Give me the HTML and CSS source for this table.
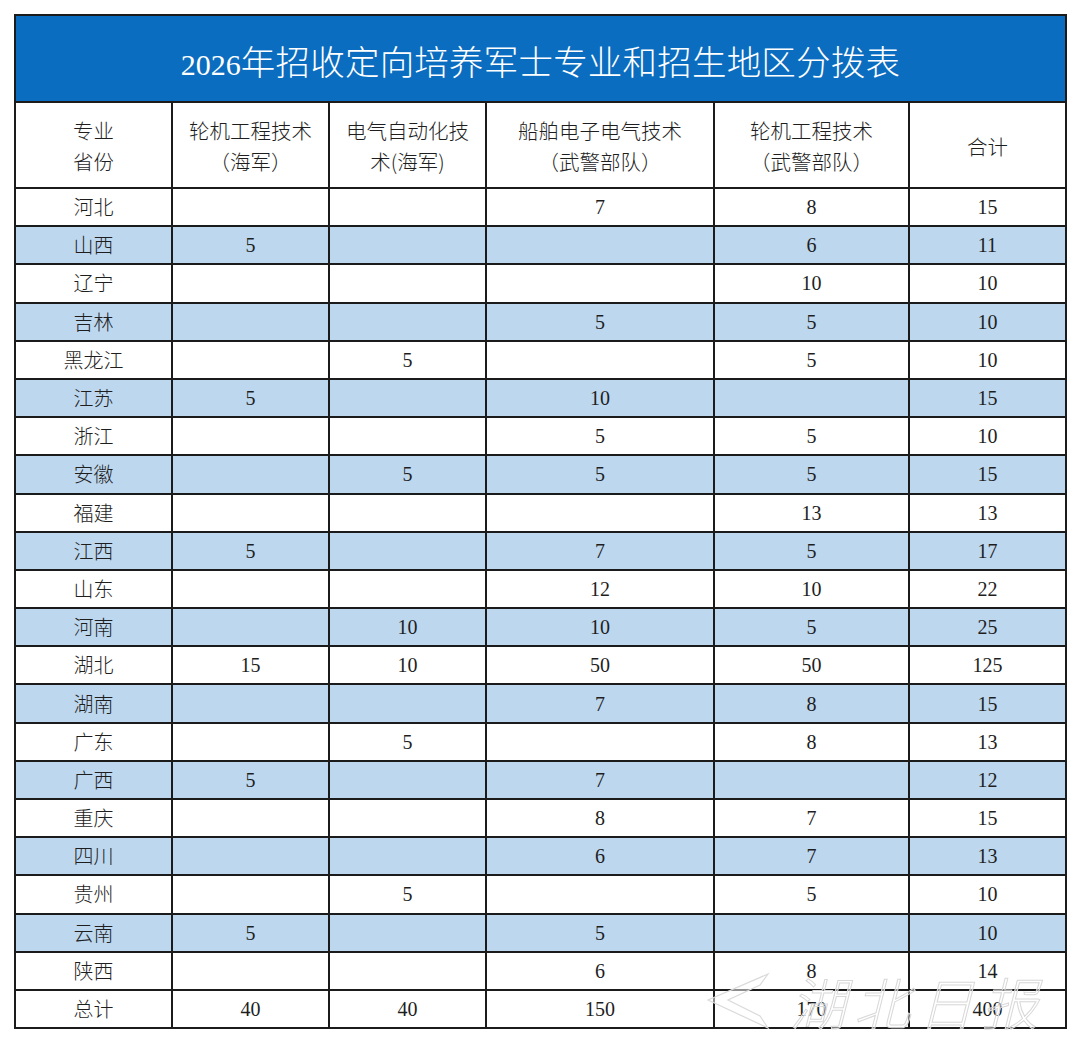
FILE: index.html
```html
<!DOCTYPE html>
<html lang="zh-CN">
<head>
<meta charset="utf-8">
<title>2026年招收定向培养军士专业和招生地区分拨表</title>
<link rel="stylesheet" href="styles.css">
</head>
<body>
<div class="page">
  <table class="plan">
    <colgroup>
      <col class="c-prov"><col class="c-a"><col class="c-b"><col class="c-c"><col class="c-d"><col class="c-e">
    </colgroup>
    <thead>
      <tr class="title-row"><th colspan="6"><span class="num">2026</span>年招收定向培养军士专业和招生地区分拨表</th></tr>
      <tr class="head-row">
        <th>专业<br>省份</th>
        <th>轮机工程技术<br>（海军）</th>
        <th>电气自动化技<br>术(海军)</th>
        <th>船舶电子电气技术<br>（武警部队）</th>
        <th>轮机工程技术<br>（武警部队）</th>
        <th>合计</th>
      </tr>
    </thead>
    <tbody>
      <tr><td>河北</td><td></td><td></td><td>7</td><td>8</td><td>15</td></tr>
      <tr class="alt"><td>山西</td><td>5</td><td></td><td></td><td>6</td><td>11</td></tr>
      <tr><td>辽宁</td><td></td><td></td><td></td><td>10</td><td>10</td></tr>
      <tr class="alt"><td>吉林</td><td></td><td></td><td>5</td><td>5</td><td>10</td></tr>
      <tr><td>黑龙江</td><td></td><td>5</td><td></td><td>5</td><td>10</td></tr>
      <tr class="alt"><td>江苏</td><td>5</td><td></td><td>10</td><td></td><td>15</td></tr>
      <tr><td>浙江</td><td></td><td></td><td>5</td><td>5</td><td>10</td></tr>
      <tr class="alt"><td>安徽</td><td></td><td>5</td><td>5</td><td>5</td><td>15</td></tr>
      <tr><td>福建</td><td></td><td></td><td></td><td>13</td><td>13</td></tr>
      <tr class="alt"><td>江西</td><td>5</td><td></td><td>7</td><td>5</td><td>17</td></tr>
      <tr><td>山东</td><td></td><td></td><td>12</td><td>10</td><td>22</td></tr>
      <tr class="alt"><td>河南</td><td></td><td>10</td><td>10</td><td>5</td><td>25</td></tr>
      <tr><td>湖北</td><td>15</td><td>10</td><td>50</td><td>50</td><td>125</td></tr>
      <tr class="alt"><td>湖南</td><td></td><td></td><td>7</td><td>8</td><td>15</td></tr>
      <tr><td>广东</td><td></td><td>5</td><td></td><td>8</td><td>13</td></tr>
      <tr class="alt"><td>广西</td><td>5</td><td></td><td>7</td><td></td><td>12</td></tr>
      <tr><td>重庆</td><td></td><td></td><td>8</td><td>7</td><td>15</td></tr>
      <tr class="alt"><td>四川</td><td></td><td></td><td>6</td><td>7</td><td>13</td></tr>
      <tr><td>贵州</td><td></td><td>5</td><td></td><td>5</td><td>10</td></tr>
      <tr class="alt"><td>云南</td><td>5</td><td></td><td>5</td><td></td><td>10</td></tr>
      <tr><td>陕西</td><td></td><td></td><td>6</td><td>8</td><td>14</td></tr>
      <tr><td>总计</td><td>40</td><td>40</td><td>150</td><td>170</td><td>400</td></tr>
    </tbody>
  </table>
  <div class="watermark" aria-hidden="true">
    <svg class="wm-logo" width="76" height="66" viewBox="0 0 76 66">
      <path d="M68 6 L8 32 L68 60 L60 48 L28 32 L60 17 Z" fill="rgba(255,255,255,0.5)" stroke="#dadada" stroke-width="1.2"/>
    </svg>
    <span class="wm-text">湖北日报</span>
  </div>
</div>
</body>
</html>
```

FILE: styles.css
```css
html, body {
  margin: 0;
  padding: 0;
  background: #ffffff;
}

.page {
  position: relative;
  width: 1080px;
  height: 1042px;
  overflow: hidden;
  padding: 14px 0 0 14px;
  box-sizing: border-box;
}

.plan {
  border-collapse: collapse;
  table-layout: fixed;
  width: 1051px;
  font-family: "Liberation Serif", "Noto Sans CJK SC", serif;
  color: #1e1e1e;
}

.c-prov { width: 157px; }
.c-a { width: 157px; }
.c-b { width: 157px; }
.c-c { width: 228px; }
.c-d { width: 195px; }
.c-e { width: 157px; }

.plan th,
.plan td {
  border: 2px solid #1b1b1b;
  text-align: center;
  vertical-align: middle;
  padding: 0;
}

.title-row th {
  height: 83px;
  background: #0b6dbf;
  color: #ffffff;
  font-size: 34.5px;
  letter-spacing: 0.2px;
  font-family: "Noto Sans CJK SC", sans-serif;
  font-weight: 300;
  padding-top: 2px;
}

.title-row .num {
  font-family: "Liberation Serif", serif;
  font-size: 30px;
  letter-spacing: 0;
  font-weight: normal;
}

.head-row th {
  height: 82px;
  font-weight: 300;
  font-size: 20.5px;
  line-height: 31px;
  padding-top: 2px;
  font-family: "Noto Sans CJK SC", sans-serif;
}

.plan tbody td {
  height: 36.2px;
  font-size: 20px;
  line-height: 22px;
}

.plan tbody td:first-child {
  font-family: "Noto Sans CJK SC", sans-serif;
  font-weight: 300;
}

.plan tbody tr.alt td {
  background: #bdd7ee;
}

.watermark {
  position: absolute;
  left: 700px;
  top: 960px;
  display: flex;
  flex-wrap: nowrap;
  align-items: center;
  gap: 14px;
  white-space: nowrap;
  pointer-events: none;
}

.wm-text {
  font-family: "Noto Sans CJK SC", sans-serif;
  font-size: 56px;
  font-weight: 300;
  font-style: italic;
  letter-spacing: 8px;
  color: rgba(255, 255, 255, 0.45);
  -webkit-text-stroke: 1px #d8d8d8;
}
```
